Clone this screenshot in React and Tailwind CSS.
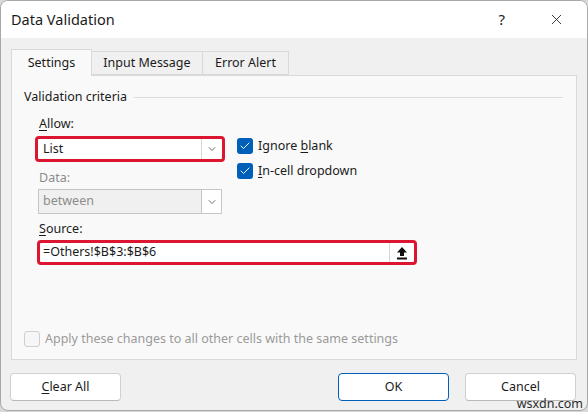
import { Check, X, ChevronDown } from 'lucide-react'

const font = { fontFamily: '"Noto Sans", "Open Sans", sans-serif' }

function Checkbox({ checked, disabled }) {
  if (checked) {
    return (
      <span className="flex h-[16px] w-[16px] shrink-0 items-center justify-center rounded-[3px] bg-[#005fb8]">
        <Check size={12} strokeWidth={2} className="text-white" />
      </span>
    )
  }
  return (
    <span
      className={
        disabled
          ? 'h-[16px] w-[16px] shrink-0 rounded-[3px] border border-[#cfcfcf] bg-[#f6f6f6]'
          : 'h-[16px] w-[16px] shrink-0 rounded-[3px] border border-[#8a8a8a] bg-white'
      }
    />
  )
}

function UploadIcon() {
  return (
    <svg width="12" height="14" viewBox="0 0 12 14">
      <path d="M6 1 L11 6.5 H8 V10 H4 V6.5 H1 Z" fill="#111" />
      <rect x="1" y="11.5" width="10" height="2" fill="#111" />
    </svg>
  )
}

export default function App() {
  return (
    <div className="relative h-[412px] w-[588px] bg-[#d9d9d9]" style={font}>
      <div className="flex h-[411px] w-[588px] flex-col overflow-hidden rounded-lg border border-[#a8a8a8] bg-[#f0f0f0] text-[12.5px] text-[#1b1b1b]">
        {/* title bar */}
        <div className="flex h-[37px] shrink-0 items-center bg-white pl-[10px]">
          <span className="text-[14.5px] text-[#1b1b1b]">Data Validation</span>
          <span className="ml-auto mr-[43px] text-[15px]">?</span>
          <X size={17} strokeWidth={1.2} className="mr-[22px] text-[#1b1b1b]" />
        </div>

        {/* tabs */}
        <div className="ml-[10px] mt-[10px] flex h-[27px] items-end">
          <div className="relative z-10 -mb-px flex h-[27px] w-[81px] items-center justify-center border border-b-0 border-[#d9d9d9] bg-[#f9f9f9]">
            Settings
          </div>
          <div className="flex h-[24px] w-[111px] items-center justify-center border border-l-0 border-[#d9d9d9] bg-[#f0f0f0]">
            Input Message
          </div>
          <div className="flex h-[24px] w-[86px] items-center justify-center border border-l-0 border-[#d9d9d9] bg-[#f0f0f0]">
            Error Alert
          </div>
        </div>

        {/* panel */}
        <div className="ml-[10px] flex h-[285px] w-[566px] flex-col border border-[#d9d9d9] bg-[#f9f9f9]">
          <div className="mt-[12px] flex h-[18px] items-center pl-[12px] pr-[13px]">
            <span>Validation criteria</span>
            <span className="ml-[7px] h-px flex-1 bg-[#dcdcdc]" />
          </div>

          <div className="flex pl-[23px]">
            <div className="flex w-[190px] flex-col">
              <div className="mt-[9px] h-[18px] pl-[4px] leading-[18px]">
                <span className="underline underline-offset-2">A</span>llow:
              </div>
              <div className="mt-[3px] flex h-[26px] items-stretch rounded-[4px] border-[3px] border-[#dc1530] bg-white">
                <span className="flex flex-1 items-center pl-[5px]">List</span>
                <span className="flex w-[21px] items-center justify-center border-l border-[#d6d6d6]">
                  <ChevronDown size={12} strokeWidth={1.5} className="text-[#444]" />
                </span>
              </div>
              <div className="mt-[7px] h-[18px] pl-[4px] leading-[18px] text-[#8c8c8c]">Data:</div>
              <div className="ml-[3px] mt-[2px] flex h-[25px] w-[184px] items-stretch border border-[#c6c6c6] bg-[#f0f0f0]">
                <span className="flex flex-1 items-center pl-[4px] text-[#8c8c8c]">between</span>
                <span className="flex w-[20px] items-center justify-center border-l border-[#c6c6c6] bg-white">
                  <ChevronDown size={12} strokeWidth={1.5} className="text-[#444]" />
                </span>
              </div>
            </div>

            <div className="ml-[12px] mt-[32px] flex flex-col gap-[9px] leading-[16px]">
              <div className="flex items-center gap-[5px]">
                <Checkbox checked />
                <span>
                  Ignore <span className="underline underline-offset-2">b</span>lank
                </span>
              </div>
              <div className="flex items-center gap-[5px]">
                <Checkbox checked />
                <span>
                  <span className="underline underline-offset-2">I</span>n-cell dropdown
                </span>
              </div>
            </div>
          </div>

          <div className="mt-[6px] h-[18px] pl-[27px] leading-[18px]">
            <span className="underline underline-offset-2">S</span>ource:
          </div>
          <div className="ml-[25px] mt-[2px] flex h-[25px] w-[380px] items-stretch rounded-[4px] border-[3px] border-[#dc1530] bg-white">
            <span className="flex flex-1 items-center pl-[3px]">=Others!$B$3:$B$6</span>
            <span className="flex w-[25px] items-center justify-center border-l border-[#d6d6d6]">
              <UploadIcon />
            </span>
          </div>

          <div className="ml-[12px] mt-[66px] flex items-center gap-[5px] leading-[16px] text-[#9a9a9a]">
            <Checkbox disabled />
            <span>Apply these changes to all other cells with the same settings</span>
          </div>
        </div>

        {/* buttons */}
        <div className="mt-[13px] flex h-[28px] pl-[9px]">
          <button type="button" className="w-[111px] rounded-[4px] border border-[#d0d0d0] border-b-[#b8b8b8] bg-white leading-[16px]">
            <span className="underline underline-offset-2">C</span>lear All
          </button>
          <button type="button" className="ml-[217px] w-[111px] rounded-[4px] border border-[#005fb8] bg-white leading-[16px]">
            OK
          </button>
          <button type="button" className="ml-[16px] w-[111px] rounded-[4px] border border-[#d0d0d0] border-b-[#b8b8b8] bg-white leading-[16px]">
            Cancel
          </button>
        </div>
      </div>
      <span className="absolute bottom-[2px] right-[5px] text-[12.5px] leading-[13px] text-[#2a2a2a]">wsxdn.com</span>
    </div>
  )
}
